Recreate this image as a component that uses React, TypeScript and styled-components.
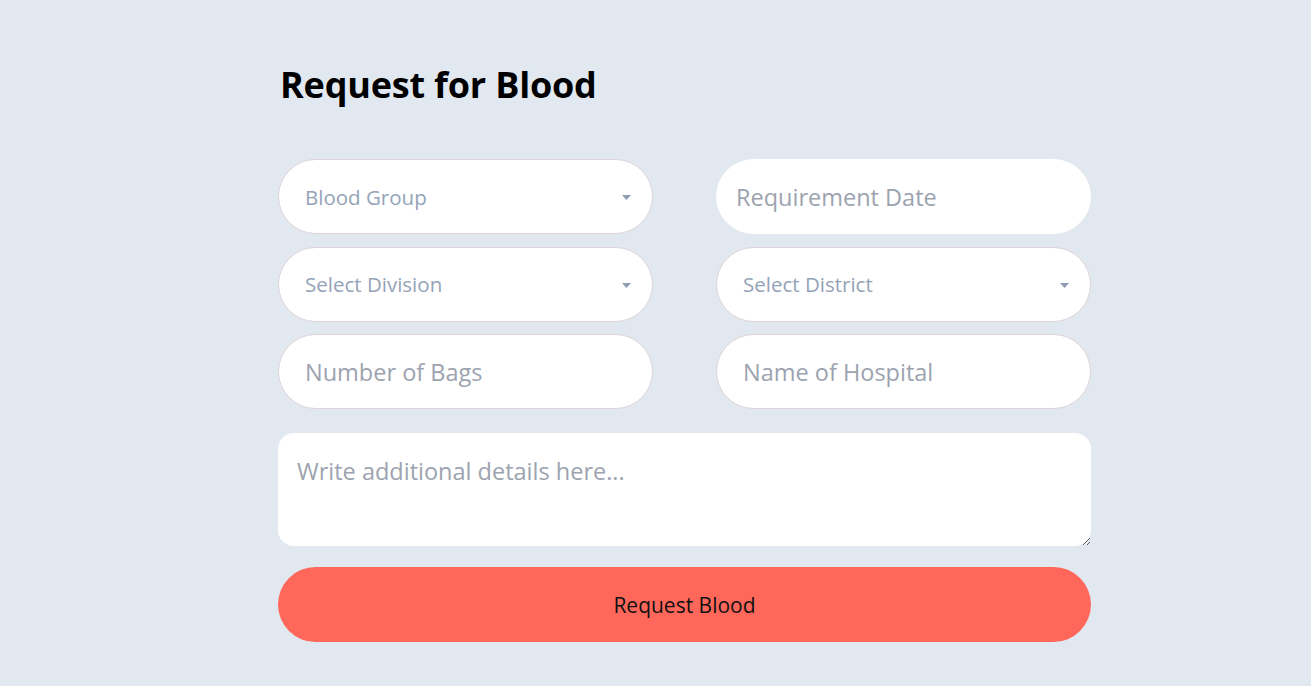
import React from "react";
import styled, { createGlobalStyle } from "styled-components";

const Global = createGlobalStyle`
  html, body { margin: 0; padding: 0; background: #e2e8f0; }
  body { font-family: "Open Sans", "Noto Sans", sans-serif; }
  * { box-sizing: border-box; }
`;

const Page = styled.main`
  min-height: 686px;
  padding: 62px 0 0 278px;
`;

const Form = styled.form`
  width: 813px;
  display: flex;
  flex-direction: column;
`;

const Title = styled.h1`
  margin: 0 0 51px 2px;
  font-size: 36px;
  font-weight: 700;
  color: #000;
  line-height: 46px;
  letter-spacing: -0.2px;
`;

const Grid = styled.div`
  display: grid;
  grid-template-columns: 375px 375px;
  column-gap: 63px;
  row-gap: 12.5px;
`;

const SelectWrap = styled.div`
  position: relative;
  height: 75px;
`;

const Select = styled.select`
  appearance: none;
  width: 100%;
  height: 100%;
  border-radius: 38px;
  border: 1px solid #ddd3d8;
  background: #fff;
  padding: 0 40px 0 26px;
  font-family: inherit;
  font-size: 20.5px;
  color: #94a3b8;
  outline: none;
`;

const Caret = styled.svg`
  position: absolute;
  right: 22px;
  top: 36px;
  pointer-events: none;
`;

const Input = styled.input<{ $bordered?: boolean; $pad?: number }>`
  height: 75px;
  width: 100%;
  border-radius: 38px;
  border: 1px solid ${(p) => (p.$bordered ? "#ddd3d8" : "#fff")};
  background: #fff;
  padding: 0 0 0 ${(p) => p.$pad ?? 26}px;
  font-family: inherit;
  font-size: 23.5px;
  color: #333;
  outline: none;
  &::placeholder { color: #9ca3af; }
`;

const TextArea = styled.textarea`
  margin-top: 24px;
  height: 113px;
  width: 100%;
  border: none;
  border-radius: 16px;
  background: #fff;
  padding: 22px 19px;
  font-family: inherit;
  font-size: 23.5px;
  outline: none;
  &::placeholder { color: #9ca3af; }
`;

const Button = styled.button`
  margin-top: 21px;
  height: 75px;
  width: 100%;
  border: none;
  border-radius: 38px;
  background: #ff675b;
  color: #111;
  font-family: inherit;
  font-size: 21px;
  cursor: pointer;
`;

const Dropdown = ({ label }: { label: string }) => (
  <SelectWrap>
    <Select defaultValue="">
      <option value="" disabled>
        {label}
      </option>
    </Select>
    <Caret width="9" height="5" viewBox="0 0 9 5">
      <path d="M0 0h9L4.5 5z" fill="#8e9bb0" />
    </Caret>
  </SelectWrap>
);

export default function App() {
  return (
    <>
      <Global />
      <Page>
        <Form onSubmit={(e) => e.preventDefault()}>
          <Title>Request for Blood</Title>
          <Grid>
            <Dropdown label="Blood Group" />
            <Input placeholder="Requirement Date" $pad={19} />
            <Dropdown label="Select Division" />
            <Dropdown label="Select District" />
            <Input placeholder="Number of Bags" $bordered />
            <Input placeholder="Name of Hospital" $bordered />
          </Grid>
          <TextArea placeholder="Write additional details here..." />
          <Button type="submit">Request Blood</Button>
        </Form>
      </Page>
    </>
  );
}
